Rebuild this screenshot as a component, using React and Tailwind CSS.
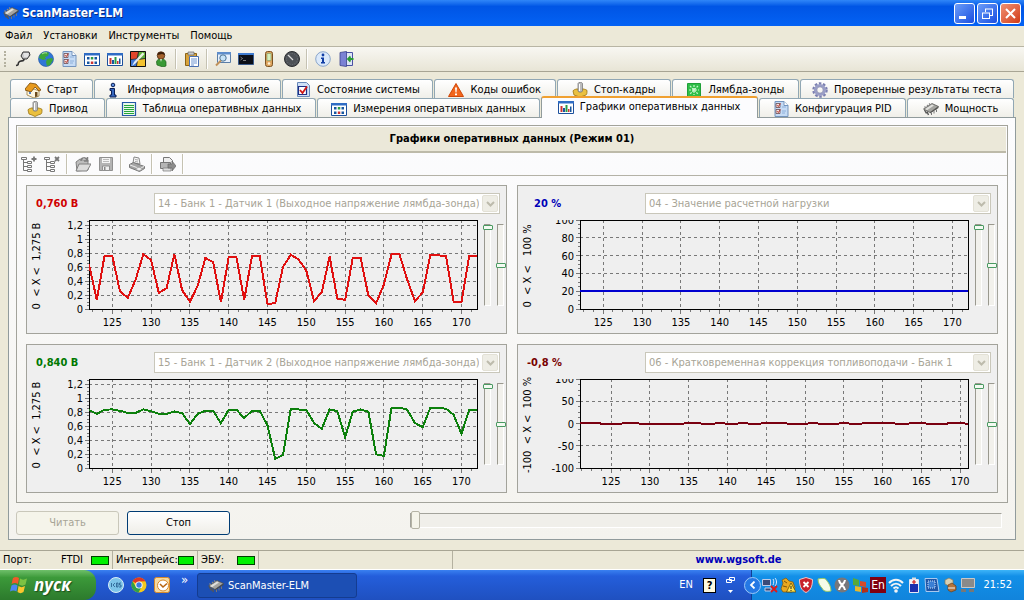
import React from "react";

/* ---------- Icons ---------- */

const Icon = ({ children, className = "w-4 h-4" }) => (
  <svg viewBox="0 0 16 16" className={`${className} shrink-0`} aria-hidden="true">
    {children}
  </svg>
);

const ChipIcon = ({ className }) => (
  <Icon className={className}>
    <path d="M1.500 9l2 3.500M4 10.500l1.500 3.500" stroke="#555" fill="none" strokeWidth="1.400" />
    <path d="M0.500 8L9 2.500l6.500 3L7 11.500z" fill="#a4a4a0" stroke="#4a4a48" strokeWidth="0.700" />
    <path d="M2 8l7-4.500 2 1L4 9.200z" fill="#e0e0dc" />
    <path d="M3 7L1.500 5.500M5.500 5.500L4 4M7.500 4L6 2.500" stroke="#888" strokeWidth="1.200" />
    <path d="M7 11.500v1l8.500-5.500V5.500z" fill="#4b4b49" />
    <path d="M8.500 11.500v2.500M11 10v2.500M13.500 8.500V11" stroke="#777" />
  </Icon>
);

const PlugIcon = () => (
  <Icon>
    <path d="M8 1l6 0 1 3-3 4-4 0-2-3z" fill="#c9c9c9" stroke="#333" />
    <path d="M8.500 3h5M9 5h4" stroke="#fff" />
    <path d="M9 8c0 3-3 1-5 3s1 3-3 3.500" stroke="#333" strokeWidth="1.600" fill="none" />
  </Icon>
);

const GlobeIcon = () => (
  <Icon>
    <circle cx="8" cy="8" r="7.500" fill="#2f76d8" stroke="#1d4f9e" strokeWidth="0.600" />
    <path d="M2 4c2-3 6-4 9-2l-1 3-3 1 1 2-3 1-4-2zM9 8l5-1 1 2-3 5-3 1-1-4z" fill="#3da63a" />
    <path d="M4 3c1-1 3-1.500 5-1" stroke="#b8e6a8" fill="none" />
  </Icon>
);

const ConfigIcon = () => (
  <Icon>
    <path d="M2 0.500h9l4 4v11H2z" fill="#c5dbf5" stroke="#7494bd" />
    <path d="M11 0.500v4h4" fill="#fff" stroke="#7494bd" />
    <path d="M3 2.500h4v4H3zM3 8.500h4v4H3z" fill="#f4e4e2" stroke="#6c4a50" strokeWidth="0.800" />
    <path d="M4 4.200l1.300 1.300L7.500 2.500M4 10.200l1.300 1.300L7.500 8.500" stroke="#b42a20" fill="none" />
    <path d="M9 6h4M9 10h4M9 12h3" stroke="#8fb0da" />
  </Icon>
);

const GridIcon = () => (
  <Icon>
    <path d="M0.500 2.500h15v12H.5z" fill="#fff" stroke="#1c4f9c" />
    <path d="M0 2h16v2.500H0z" fill="#2f6cc4" />
    <path d="M3 6h2.500v2.500H3zM10.500 6H13v2.500h-2.500zM3 10.500h2.500V13H3z" fill="#17569f" />
    <path d="M6.800 6h2.500v2.500H6.800z" fill="#2c9b45" />
    <path d="M6.800 10.500h2.500V13H6.800z" fill="#c33" />
    <path d="M10.500 10.500H13V13h-2.500z" fill="#17569f" />
  </Icon>
);

const BarsIcon = () => (
  <Icon>
    <path d="M0.500 2.500h15v12H.5z" fill="#fff" stroke="#1c4f9c" />
    <path d="M0 2h16v2.500H0z" fill="#2f6cc4" />
    <path d="M2.500 7h2v6h-2z" fill="#c33" />
    <path d="M5 9h2v4H5z" fill="#17569f" />
    <path d="M7.500 6h2v7h-2z" fill="#2c9b45" />
    <path d="M10 10h1.500v3H10z" fill="#c33" />
    <path d="M12 7.500h1.500V13H12z" fill="#17569f" />
  </Icon>
);

const SystemIcon = () => (
  <Icon>
    <path d="M0.500 0.500h15v15H.5z" fill="#333" stroke="#111" />
    <path d="M1 1h7L6.500 7.500 1 8z" fill="#e0452c" />
    <path d="M9 1h6v6l-7 1z" fill="#5fae3a" />
    <path d="M1 9l6-1-1 7H1z" fill="#3e78d6" />
    <path d="M8 9l7-1v7H7z" fill="#f2c230" />
    <path d="M12.500 1.500L4 11l-2 4 4-3 8.500-9z" fill="#fff" opacity="0.850" />
  </Icon>
);

const UserIcon = () => (
  <Icon>
    <path d="M3.500 11c0-4 9-4 9.500 0v4l-3 1-6-2z" fill="#3a9a35" stroke="#1e611b" strokeWidth="0.700" />
    <circle cx="8" cy="4.500" r="3.800" fill="#a4622c" stroke="#40210b" strokeWidth="0.700" />
    <path d="M4.500 4c0-4 7-4 7.500 0L9 3z" fill="#3a1d0a" />
    <path d="M7 8l1 3 1-3z" fill="#d8e8d0" />
  </Icon>
);

const ClipboardIcon = () => (
  <Icon>
    <path d="M1.500 2.500h11v12h-11z" fill="#d8a33c" stroke="#8c6414" />
    <path d="M4 1h6v3H4z" fill="#c9c9c9" stroke="#666" strokeWidth="0.700" />
    <path d="M5.500 5.500h9v10h-9z" fill="#fff" stroke="#4a6fb0" />
    <path d="M7 8h6M7 10h6M7 12h6M7 14h3" stroke="#6d94d1" />
  </Icon>
);

const SearchWindowIcon = () => (
  <Icon>
    <path d="M2.500 1.500h13v10h-13z" fill="#e8f1fc" stroke="#5b7ea8" />
    <path d="M2 1h14v2.500H2z" fill="#5f8ecc" />
    <circle cx="8" cy="7" r="3.200" fill="#c8e4f8" stroke="#4d7494" />
    <path d="M6 9.500L1 14.500" stroke="#c0915a" strokeWidth="2" />
  </Icon>
);

const TerminalIcon = () => (
  <Icon>
    <path d="M0.500 2.500h15v11H.5z" fill="#0b0f18" stroke="#3b5b8c" />
    <path d="M0 2h16v2H0z" fill="#3f7bd0" />
    <path d="M2.500 6l2 1.500-2 1.500M5 9.500h3" stroke="#aaa" fill="none" strokeWidth="0.700" />
  </Icon>
);

const DeviceIcon = () => (
  <Icon>
    <rect x="4.500" y="0.500" width="7" height="15" rx="2" fill="#dca45e" stroke="#7c5322" />
    <rect x="6" y="2.500" width="4" height="7" fill="#d6f0bd" stroke="#7d9a68" strokeWidth="0.600" />
    <circle cx="8" cy="12.500" r="1.300" fill="#fff2d8" />
  </Icon>
);

const GaugeIcon = () => (
  <Icon>
    <circle cx="8" cy="8" r="7.500" fill="#4d5156" stroke="#2b2d30" />
    <circle cx="8" cy="8" r="5.500" fill="none" stroke="#70757a" strokeDasharray="1 1.500" />
    <path d="M4 4l5 5" stroke="#ddd" strokeWidth="1.200" />
  </Icon>
);

const InfoIcon = () => (
  <Icon>
    <circle cx="8" cy="8" r="7.300" fill="#dbe9fa" stroke="#8aa6cb" />
    <circle cx="8" cy="4" r="1.400" fill="#123fa5" />
    <path d="M6 6.500h3V11h1v1.500H6V11h1V8H6z" fill="#123fa5" />
  </Icon>
);

const ExitIcon = () => (
  <Icon>
    <path d="M5.500 1.500h9v13h-9z" fill="#dde6f6" stroke="#4a50a4" />
    <path d="M2 1.500L8.500 0.500v15L2 14.500z" fill="#7b82d4" stroke="#3b418c" strokeWidth="0.800" />
    <path d="M15.500 8H11M12.500 5.500L10 8l2.500 2.500" stroke="#2a9a35" strokeWidth="1.800" fill="none" />
  </Icon>
);

const HomeIcon = () => (
  <Icon>
    <path d="M2 8l7-1 5 2v5l-5 2-7-3z" fill="#fdf6e0" stroke="#8c6a22" strokeWidth="0.700" />
    <path d="M0 7l5-6 6 1 5 6-2 1-4-4-4 5-6-2z" fill="#e79a1e" stroke="#734607" strokeWidth="0.800" />
    <path d="M10 10h2.500v4.500L10 15z" fill="#6b4a1d" />
    <path d="M4 10h2v2H4z" fill="#5683c4" />
  </Icon>
);

const LetterIIcon = () => (
  <Icon>
    <circle cx="8" cy="3" r="1.800" fill="#5b8ce0" stroke="#0b1f55" />
    <path d="M5 6.500h4.500v6.500H11v2H5v-2h1.500V8.500H5z" fill="#3566be" stroke="#0b1f55" />
  </Icon>
);

const CheckPageIcon = () => (
  <Icon>
    <path d="M2.500 0.500h9l3 3v11h-12z" fill="#cfe0f7" stroke="#6888b9" />
    <path d="M3.500 4.500h8v8h-8z" fill="#fff" stroke="#1d2f86" strokeWidth="1.200" />
    <path d="M5 8l2.500 3L12 4.500" stroke="#d01818" strokeWidth="1.800" fill="none" />
  </Icon>
);

const WarningIcon = () => (
  <Icon>
    <path d="M8 1.500L15.500 14.500H.5z" fill="#f2661d" stroke="#cf4709" strokeLinejoin="round" />
    <path d="M7 5.500h2l-.5 5h-1zM7 11.500h2v1.800H7z" fill="#fff" />
  </Icon>
);

const StampIcon = () => (
  <Icon>
    <path d="M1 9c1-2 2-1 3-2h8c1 1 3 0 3 2s0 3-1 4l-3 1-3 1.500L5 14l-3-1z" fill="#eac040" stroke="#9a7412" strokeWidth="0.800" />
    <path d="M6 1.500c0-1.500 4.500-1.500 4.500 0V9c0 1.500-4.500 1.500-4.500 0z" fill="#bcbcbc" stroke="#6f6f6f" strokeWidth="0.700" />
    <path d="M7.500 2v7" stroke="#fff" />
  </Icon>
);

const LambdaIcon = () => (
  <Icon>
    <path d="M1.500 1.500h13v13h-13z" fill="#2fbe48" stroke="#1fa038" />
    <path d="M4 4l8 8M12 4l-8 8M8 3v10M3 8h10" stroke="#c9f5cd" strokeWidth="1.200" strokeDasharray="2 1" />
  </Icon>
);

const GearIcon = () => (
  <Icon>
    <circle cx="8" cy="8" r="6.500" fill="none" stroke="#7b7fb0" strokeWidth="2.500" strokeDasharray="2.500 1.600" />
    <circle cx="8" cy="8" r="4.700" fill="none" stroke="#9a9ec6" strokeWidth="2.800" />
    <circle cx="8" cy="8" r="3.200" fill="none" stroke="#6a6e9e" strokeWidth="0.600" />
  </Icon>
);

const TableIcon = () => (
  <Icon>
    <path d="M1.500 1.500h13v13h-13z" fill="#eafbe9" stroke="#2458a8" strokeWidth="1.200" />
    <path d="M3 4.500h10M3 6.500h10M3 8.500h10M3 10.500h10M3 12.500h10" stroke="#27a53b" />
  </Icon>
);

const TreeIcon = ({ mark }) => (
  <Icon>
    <path d="M0.500 1.500h5v2h-5zM2.500 4v10.500H6M2.500 6.500H6M2.500 10.500H6" fill="none" stroke="#777" />
    <path d="M6.500 5.500h4v2h-4zM6.500 9.500h4v2h-4zM6.500 13.500h4v2h-4z" fill="#fff" stroke="#777" />
    <path d={mark === "add" ? "M13 0.500v5M10.500 3h5" : "M11 1l4 4M15 1l-4 4"} stroke="#777" strokeWidth="1.800" />
  </Icon>
);

const OpenIcon = () => (
  <Icon>
    <path d="M1 6l4-3 3 1h5v10l-11 1z" fill="#bdbdbd" stroke="#808080" />
    <path d="M4 8h12l-4 7H1z" fill="#dcdcdc" stroke="#808080" />
    <path d="M6 5c0-4 5-4 6-1M12.500 1v4H9" fill="none" stroke="#808080" strokeWidth="1.500" />
  </Icon>
);

const SaveIcon = () => (
  <Icon>
    <path d="M1.500 1.500h13v13h-13z" fill="#b4b4b4" stroke="#909090" />
    <path d="M4 2h8v5H4z" fill="#f4f4f4" />
    <path d="M5 3.500h6M5 5.500h6" stroke="#bbb" />
    <path d="M4.500 10h7v4.500h-7z" fill="#eee" stroke="#909090" />
    <path d="M6 11h1.500v3H6z" fill="#888" />
  </Icon>
);

const PrintIcon = () => (
  <Icon>
    <path d="M4 7l1-6 5 1 1 6z" fill="#f6f6f6" stroke="#888" />
    <path d="M6 3.500l3 .5M6 5.500l3 .5" stroke="#aaa" />
    <path d="M0.500 8.500l4-2 11 4v2l-5 3-10-4z" fill="#a5a5a5" stroke="#777" />
    <path d="M1 9l9.500 3.500 4.500-2" fill="none" stroke="#eee" />
    <path d="M6 13l4-2 4 2-4 2z" fill="#eee" stroke="#888" strokeWidth="0.700" />
  </Icon>
);

const ExportIcon = () => (
  <Icon>
    <path d="M3.500 1.500h6l3 3v7h-9z" fill="#eee" stroke="#777" />
    <path d="M0.500 6.500h10v6H.5z" fill="#b5b5b5" stroke="#777" />
    <path d="M3 12h8v3H3z" fill="#ddd" stroke="#777" strokeWidth="0.700" />
    <path d="M8 8h4V5l4 5-4 5v-3H8z" fill="#8c8c8c" stroke="#666" strokeWidth="0.700" />
  </Icon>
);

/* ---------- Data ---------- */

const menu = ["Файл", "Установки", "Инструменты", "Помощь"];

const tools = [
  { label: "Подключение", icon: PlugIcon },
  { label: "Интернет", icon: GlobeIcon },
  { label: "Конфигурация", icon: ConfigIcon },
  { label: "Измерения", icon: GridIcon },
  { label: "Графики", icon: BarsIcon },
  { label: "Система", icon: SystemIcon },
  { label: "Пользователь", icon: UserIcon },
  null,
  { label: "Буфер", icon: ClipboardIcon },
  null,
  { label: "Поиск", icon: SearchWindowIcon },
  { label: "Терминал", icon: TerminalIcon },
  { label: "Устройство", icon: DeviceIcon },
  { label: "Мощность", icon: GaugeIcon },
  null,
  { label: "О программе", icon: InfoIcon },
  { label: "Выход", icon: ExitIcon },
];

const tabsTop = [
  { label: "Старт", icon: HomeIcon, size: "flex-[82]" },
  { label: "Информация о автомобиле", icon: LetterIIcon, size: "flex-[187]" },
  { label: "Состояние системы", icon: CheckPageIcon, size: "flex-[151]" },
  { label: "Коды ошибок", icon: WarningIcon, size: "flex-[121]" },
  { label: "Стоп-кадры", icon: StampIcon, size: "flex-[114]" },
  { label: "Лямбда-зонды", icon: LambdaIcon, size: "flex-[126]" },
  { label: "Проверенные результаты теста", icon: GearIcon, size: "flex-[215]" },
];

const tabsBottom = [
  { label: "Привод", icon: StampIcon, size: "flex-[94]" },
  { label: "Таблица оперативных данных", icon: TableIcon, size: "flex-[210]" },
  { label: "Измерения оперативных данных", icon: GridIcon, size: "flex-[223]" },
  { label: "Графики оперативных данных", icon: BarsIcon, size: "flex-[217]", active: true },
  { label: "Конфигурация PID", icon: ConfigIcon, size: "flex-[147]" },
  { label: "Мощность", icon: ChipIcon, size: "flex-[106]" },
];

const sensor1 = [
  0.64, 0.13, 0.76, 0.76, 0.25, 0.16, 0.42, 0.785, 0.7, 0.23, 0.3, 0.785, 0.27, 0.105, 0.33, 0.73, 0.67,
  0.1, 0.74, 0.74, 0.13, 0.76, 0.76, 0.07, 0.085, 0.605, 0.776, 0.71, 0.55, 0.115, 0.24, 0.75, 0.15, 0.13,
  0.733, 0.733, 0.19, 0.085, 0.35, 0.786, 0.786, 0.42, 0.115, 0.235, 0.78, 0.77, 0.757, 0.1, 0.1, 0.757, 0.757,
];

const sensor2 = [
  0.83, 0.775, 0.835, 0.84, 0.82, 0.79, 0.79, 0.84, 0.815, 0.775, 0.775, 0.81, 0.785, 0.63, 0.775, 0.82, 0.82,
  0.64, 0.835, 0.835, 0.715, 0.82, 0.82, 0.61, 0.13, 0.185, 0.85, 0.838, 0.835, 0.645, 0.56, 0.838, 0.815, 0.44,
  0.81, 0.838, 0.805, 0.195, 0.175, 0.867, 0.867, 0.835, 0.645, 0.585, 0.867, 0.86, 0.85, 0.76, 0.49, 0.835, 0.835,
];

const load = Array(51).fill(20);

// the trim alternates between two levels at these times
const trimSwitches = [123, 126, 128, 134, 136, 138, 139, 141, 142, 144, 147, 150, 151, 154, 155, 157, 161, 163, 165, 168, 170];
const trim = Array.from({ length: 51 }, (_, i) =>
  trimSwitches.filter((t) => t < 121 + i).length % 2 ? -0.8 : 1.6
);

const charts = [
  {
    value: "0,760 В",
    tone: "text-[#d00000]",
    pad: "pl-[9px]",
    source: "14 - Банк 1 - Датчик 1 (Выходное напряжение лямбда-зонда)",
    range: "0  < X <  1,275 В",
    color: "#e01010",
    start: 122,
    min: 0,
    max: 1.275,
    step: 0.2,
    values: sensor1,
  },
  {
    value: "20 %",
    tone: "text-[#0000b8]",
    pad: "pl-4",
    source: "04 - Значение расчетной нагрузки",
    range: "0  < X <   100 %",
    color: "#0000d0",
    start: 122,
    min: 0,
    max: 100,
    step: 20,
    values: load,
  },
  {
    value: "0,840 В",
    tone: "text-[#007800]",
    pad: "pl-[9px]",
    source: "15 - Банк 1 - Датчик 2 (Выходное напряжение лямбда-зонда)",
    range: "0  < X <  1,275 В",
    color: "#0c800c",
    start: 122,
    min: 0,
    max: 1.275,
    step: 0.2,
    values: sensor2,
  },
  {
    value: "-0,8 %",
    tone: "text-[#780000]",
    pad: "pl-[9px]",
    source: "06 - Кратковременная коррекция топливоподачи - Банк 1",
    range: "-100  < X <  100 %",
    color: "#7a0010",
    start: 121,
    min: -100,
    max: 100,
    step: 50,
    values: trim,
  },
];

/* ---------- Chart ---------- */

const LEFT = 62;
const RIGHT = 450;
const TOP = 4;
const BOTTOM = 93;

const Chart = ({ id, chart }) => {
  const { start, min, max, step, values, color, range } = chart;
  const px = (t) => LEFT + ((t - start) / 50) * (RIGHT - LEFT);
  const py = (v) => BOTTOM - ((v - min) / (max - min)) * (BOTTOM - TOP);

  const xMajor = [];
  for (let t = 125; t <= 170; t += 5) xMajor.push(t);
  const xMinor = [];
  for (let t = 120; t <= 175; t += 1.25) if (t > start && t < start + 50) xMinor.push(t);

  const yMajor = [];
  for (let i = 0; min + i * step <= max + 0.001; i++) yMajor.push(min + i * step);
  const yMinor = [];
  for (let i = 0; min + (i * step) / 4 <= max; i++) yMinor.push(min + (i * step) / 4);

  const label = (v) => String(Math.round(v * 10) / 10).replace(".", ",");
  const points = values.map((v, i) => `${px(start + i).toFixed(1)},${py(v).toFixed(1)}`).join(" ");

  return (
    <svg viewBox="0 0 452 114" className="block w-full text-[11px]" role="img" aria-label={chart.source}>
      <defs>
        <clipPath id={`labels-${id}`}>
          <rect x="0" y={TOP} width="452" height="110" />
        </clipPath>
        <clipPath id={`plot-${id}`}>
          <rect x={LEFT} y={TOP} width={RIGHT - LEFT} height={BOTTOM - TOP} />
        </clipPath>
      </defs>

      {/* Grid and ticks */}
      <g stroke="#787878" strokeWidth="1" shapeRendering="crispEdges">
        {xMajor.map((t) => (
          <g key={t}>
            <line x1={px(t)} x2={px(t)} y1={TOP} y2={BOTTOM} strokeDasharray="3 3" />
            <line x1={px(t)} x2={px(t)} y1={BOTTOM} y2={BOTTOM + 5} />
          </g>
        ))}
        {xMinor.map((t) => (
          <line key={t} x1={px(t)} x2={px(t)} y1={BOTTOM} y2={BOTTOM + 3} />
        ))}
        {yMajor.map((v) => (
          <g key={v}>
            <line x1={LEFT} x2={RIGHT} y1={py(v)} y2={py(v)} strokeDasharray="3 3" />
            <line x1={LEFT - 4} x2={LEFT} y1={py(v)} y2={py(v)} />
          </g>
        ))}
        {yMinor.map((v) => (
          <line key={v} x1={LEFT - 2} x2={LEFT} y1={py(v)} y2={py(v)} />
        ))}
      </g>

      <rect
        x={LEFT + 0.5}
        y={TOP + 0.5}
        width={RIGHT - LEFT}
        height={BOTTOM - TOP}
        fill="none"
        stroke="#000"
        shapeRendering="crispEdges"
      />
      <polyline
        clipPath={`url(#plot-${id})`}
        points={points}
        fill="none"
        stroke={color}
        strokeWidth="2"
        shapeRendering="crispEdges"
      />

      {/* Labels */}
      <g clipPath={`url(#labels-${id})`} fill="#000">
        {yMajor.map((v) => (
          <text key={v} x="56" y={py(v) + 4} textAnchor="end">
            {label(v)}
          </text>
        ))}
        {xMajor.map((t) => (
          <text key={t} x={px(t)} y="110" textAnchor="middle">
            {t}
          </text>
        ))}
      </g>
      <text transform="translate(13 50) rotate(-90)" textAnchor="middle" className="whitespace-pre">
        {range}
      </text>
    </svg>
  );
};

const VerticalSlider = ({ label, value }) => (
  <input
    type="range"
    aria-label={label}
    defaultValue={value}
    className="appearance-none m-0 w-[10px] h-[82px] [writing-mode:vertical-lr] [direction:rtl] bg-transparent [&::-webkit-slider-runnable-track]:w-[7px] [&::-webkit-slider-runnable-track]:h-full [&::-webkit-slider-runnable-track]:bg-[#f2f1ec] [&::-webkit-slider-runnable-track]:border [&::-webkit-slider-runnable-track]:border-l-[#9a998f] [&::-webkit-slider-runnable-track]:border-t-[#9a998f] [&::-webkit-slider-runnable-track]:border-r-white [&::-webkit-slider-runnable-track]:border-b-white [&::-webkit-slider-thumb]:appearance-none [&::-webkit-slider-thumb]:w-[10px] [&::-webkit-slider-thumb]:h-[5px] [&::-webkit-slider-thumb]:-ml-[2px] [&::-webkit-slider-thumb]:rounded-[1px] [&::-webkit-slider-thumb]:bg-[#f3faf2] [&::-webkit-slider-thumb]:border [&::-webkit-slider-thumb]:border-[#4a9a62]"
  />
);

const ChartCard = ({ id, chart }) => (
  <section className="min-w-0 border border-[#a3a39b] bg-[#efefef] pt-[7px] pb-[3px]">
    <div className="flex items-center pr-[6px]">
      <div className={`w-[127px] shrink-0 font-bold ${chart.pad} ${chart.tone}`}>{chart.value}</div>
      <div className="relative flex-1 min-w-0">
        <select
          disabled
          aria-label="Параметр"
          className="appearance-none block w-full h-[21px] pl-[3px] pr-5 bg-white border border-[#c9c7ba] text-[#a7a496] opacity-100"
        >
          <option>{chart.source}</option>
        </select>
        <span className="absolute top-0.5 right-0.5 w-4 h-[17px] rounded-[2px] bg-[#eeede5] border border-[#e3e1d6] flex items-center justify-center pointer-events-none">
          <svg viewBox="0 0 9 6" className="w-[9px] h-[6px]">
            <path d="M1 1l3.500 3.500L8 1" fill="none" stroke="#bdbbac" strokeWidth="2" />
          </svg>
        </span>
      </div>
    </div>
    <div className="flex mt-0.5">
      <div className="flex-1 min-w-0">
        <Chart id={id} chart={chart} />
      </div>
      <div className="w-[27px] shrink-0 flex gap-[3px] pl-[3px] pt-2">
        <VerticalSlider label="Масштаб" value={100} />
        <VerticalSlider label="Смещение" value={50} />
      </div>
    </div>
  </section>
);

/* ---------- Tabs and toolbars ---------- */

const Tab = ({ tab }) => {
  const TabIcon = tab.icon;
  const look = tab.active
    ? "relative z-10 -mt-0.5 -mb-px h-[22px] pb-0.5 bg-[#fcfcfe] border-x border-t-2 border-x-[#919b9c] border-t-[#f0a030]"
    : "h-[19px] pt-0.5 bg-linear-to-b from-white to-[#f0efe9] border border-b-0 border-[#91a7b4]";
  return (
    <button
      type="button"
      role="tab"
      aria-selected={!!tab.active}
      className={`${tab.size} ${look} min-w-0 rounded-t-[3px] flex items-center justify-center gap-1.5 whitespace-nowrap`}
    >
      <TabIcon />
      {tab.label}
    </button>
  );
};

const ToolButton = ({ label, children }) => (
  <button type="button" aria-label={label} className="w-[23px] h-[22px] flex items-center justify-center">
    {children}
  </button>
);

const Separator = () => <span className="w-0.5 h-5 mx-[3px] bg-[#c5c2b2] border-r border-white" />;

const Lamp = () => <span className="w-[18px] h-[9px] bg-[#00f000] border border-[#004000]" />;

/* ---------- Windows taskbar ---------- */

const FlagIcon = () => (
  <svg viewBox="0 0 18 18" className="w-[18px] h-[18px]" aria-hidden="true">
    <path d="M3 2c2-1.500 4-1.500 6 0L8 8C6 6.500 4 6.500 1.500 8z" fill="#f0592a" />
    <path d="M10 2.500c2 1.500 4 1.500 7 0L15.500 8.500c-2 1.500-4.500 1.500-6.500 0z" fill="#7cc243" />
    <path d="M1.500 9.500c2-1.500 4-1.500 6 0l-1 6c-2-1.500-4-1.500-6.500 0z" fill="#4c86f0" />
    <path d="M8.500 10c2 1.500 4 1.500 6.500 0L13.500 16c-2 1.500-4 1.500-6 0z" fill="#fbc62e" />
  </svg>
);

const TrayIcons = () => (
  <div className="flex items-center gap-0.5">
    <Icon>
      <path d="M0.500 2.500h8v6h-8zM3 11h6v3H3z" fill="#3a4a78" stroke="#bfcbe8" />
      <path d="M11 2c1 1.500 1 4 0 6M13 1c2 2 2 6 0 8" stroke="#dfe8fa" fill="none" />
      <path d="M9 9l6 6M15 9l-6 6" stroke="#e01818" strokeWidth="1.800" />
    </Icon>
    <Icon>
      <path d="M1 12l2-6-1-3 4-2 3 3 4 1 2 6-3 4H3z" fill="#e8a820" stroke="#7c5608" strokeWidth="0.700" />
      <path d="M4 4l3 2M3 9l4 1" stroke="#7c5608" />
      <path d="M11 6l5 9H6.500z" fill="#ffe04a" stroke="#5c4400" strokeWidth="0.700" />
      <path d="M11 9v3M11 13v1" stroke="#222" />
    </Icon>
    <Icon>
      <path d="M8 0.500l6.500 2c0 7-2 11-6.500 13C3.500 13.500 1.500 9.500 1.500 2.500z" fill="#c8202c" stroke="#f0c8c8" />
      <path d="M5.500 5l5 5M10.500 5l-5 5" stroke="#fff" strokeWidth="1.800" />
    </Icon>
    <Icon>
      <path d="M2 2c5-1 8-1 9 2 2 2 4 6 4 10-5 1-8 0-9-3C4 9 2 6 2 2z" fill="#f4fbe8" stroke="#9ac860" />
    </Icon>
    <Icon>
      <circle cx="8" cy="8" r="7.500" fill="#77777b" />
      <path d="M5 3c0 4 6 6 6 10M11 3c0 4-6 6-6 10" stroke="#fff" strokeWidth="2" fill="none" />
    </Icon>
    <Icon>
      <path d="M1 1l6 2v6L1 8z" fill="#58a838" />
      <path d="M8 4l6 1v5l-6-1z" fill="#d84a28" />
      <path d="M3 9l6 1v5l-6-1z" fill="#e8b828" />
      <path d="M10 10l6 1v4l-6 1z" fill="#b83018" />
    </Icon>
    <span className="w-4 h-4 bg-[#800010] text-white text-[12px] leading-4 text-center">En</span>
    <Icon>
      <path d="M1 6c4-4.500 10-4.500 14 0M3 9c3-3 7-3 10 0M5.500 11.500c1.500-1.500 3.500-1.500 5 0" stroke="#f4f4f4" strokeWidth="2" fill="none" />
      <circle cx="8" cy="14" r="1.800" fill="#f4f4f4" />
    </Icon>
    <Icon>
      <path d="M6 0.500h4v2H6z" fill="#ddd" />
      <path d="M3.500 2.500h9v13h-9z" fill="#1c2fae" stroke="#e6e6f4" />
      <path d="M4 3h8v4H4z" fill="#f4f4f4" />
      <path d="M8 3v4M6 5h4" stroke="#d01818" strokeWidth="1.200" />
    </Icon>
    <Icon>
      <path d="M1 1.500h12l2 13H2z" fill="#1f56a8" stroke="#a8c8ee" />
      <path d="M4 4h7v7H4z" fill="#3b7fd4" stroke="#d4e4f8" strokeDasharray="1 1" />
    </Icon>
    <Icon>
      <path d="M3 3l4-2 4 2v4l-4 2-4-2z" fill="#d8d0b4" stroke="#84785a" strokeWidth="0.700" />
      <path d="M6 8l4-2 4 3v4l-5 2-3-2z" fill="#b4743c" stroke="#6c3c14" strokeWidth="0.700" />
      <path d="M6 11h7" stroke="#f4f4f4" />
    </Icon>
    <Icon>
      <path d="M1.500 1.500h13v9h-13z" fill="#8a8a8a" stroke="#c8c8c8" />
      <path d="M1 12h5v3H1zM9 12h5v3H9z" fill="#777" />
    </Icon>
  </div>
);

const Taskbar = () => (
  <footer className="flex h-[30px] bg-linear-to-b from-[#3a80f0] via-[#245edb] via-20% to-[#1f50c0] text-white">
    <button
      type="button"
      className="w-24 shrink-0 flex items-center gap-1.5 pl-2.5 rounded-r-xl bg-linear-to-b from-[#6fc06a] via-[#3c9a3a] via-25% to-[#2c7a2c] text-[17px] font-bold italic [font-family:'Open_Sans',sans-serif] [text-shadow:1px_1px_1px_#1d4f1d]"
    >
      <FlagIcon />
      пуск
    </button>

    {/* Quick launch */}
    <div className="flex items-center gap-[7px] pl-3 w-[101px] shrink-0">
      <Icon>
        <circle cx="8" cy="8" r="7.500" fill="#7cc4e8" stroke="#d8eef8" />
        <path d="M3.500 6v4M5 8l2-2M5 8l2 2M8.500 6v4h1.500V6zM13 6h-1.500v2H13v2h-2" stroke="#245c8c" fill="none" strokeWidth="0.800" />
      </Icon>
      <Icon>
        <circle cx="8" cy="8" r="7.500" fill="#f4c81c" />
        <path d="M8 8L1.500 4.200A7.500 7.500 0 0 1 14.500 4.300L8 4.500z" fill="#dc3826" />
        <path d="M1.500 4.200A7.500 7.500 0 0 0 7.500 15.500L10.500 10 5 10z" fill="#2fa04a" />
        <circle cx="8" cy="8" r="3.600" fill="#fff" />
        <circle cx="8" cy="8" r="2.700" fill="#3c7ce0" />
      </Icon>
      <Icon>
        <rect x="0.500" y="0.500" width="15" height="15" rx="2" fill="#f6d9a0" stroke="#d88a2c" />
        <circle cx="9" cy="8.500" r="5.500" fill="#fff" stroke="#d88a2c" />
        <path d="M6 7l3 3 4-3.500" stroke="#b86410" strokeWidth="1.500" fill="none" />
      </Icon>
      <span className="self-start text-[13px] leading-5 pl-1">»</span>
    </div>

    <button
      type="button"
      className="w-40 h-[25px] mt-[3px] flex items-center gap-1 pl-2.5 rounded-[3px] bg-[#1c4fb4] border border-[#143c90]"
    >
      <ChipIcon className="w-4 h-4" />
      ScanMaster-ELM
    </button>

    {/* Language bar */}
    <div className="ml-auto flex items-center gap-2.5 pr-4">
      <span>EN</span>
      <span className="w-[13px] h-[15px] bg-[#fffbe0] border border-black text-black font-bold text-center leading-[14px]">?</span>
      <svg viewBox="0 0 9 18" className="w-[9px] h-[18px]" aria-hidden="true">
        <path d="M3.500 1.500h5v3h-5zM.5 3.500h5v3h-5z" fill="#245edb" stroke="#fff" />
        <path d="M2 14h5l-2.500 3z" fill="#fff" />
      </svg>
    </div>

    {/* Tray */}
    <div className="flex items-center w-[273px] shrink-0 bg-linear-to-b from-[#3cb4f8] via-[#1290e8] via-20% to-[#1184dc] border-l border-[#0f3f94]">
      <button
        type="button"
        aria-label="Показать значки"
        className="-ml-2 mr-px w-[17px] h-[17px] shrink-0 rounded-full bg-[#2478e4] border border-[#9cc8f8] flex items-center justify-center"
      >
        <svg viewBox="0 0 8 8" className="w-2 h-2">
          <path d="M5.500 0.500L2 4l3.500 3.500" fill="none" stroke="#fff" strokeWidth="1.800" />
        </svg>
      </button>
      <TrayIcons />
      <span className="ml-auto pr-3">21:52</span>
    </div>
  </footer>
);

/* ---------- Page ---------- */

const App = () => {
  return (
    <div className="min-h-screen flex flex-col bg-[#ece9d8] text-black text-[11px] leading-[14px] [font-family:'DejaVu_Sans_Condensed','DejaVu_Sans',sans-serif]">
      {/* Title bar */}
      <header className="flex items-center h-[26px] px-[3px] bg-linear-to-b from-[#2f86f8] via-[#0055e5] via-25% to-[#0462f4] text-white">
        <ChipIcon className="w-4 h-4" />
        <h1 className="ml-[3px] text-[12px] font-bold [text-shadow:1px_1px_0_#0a2a80]">ScanMaster-ELM</h1>
        <div className="ml-auto flex gap-0.5">
          <button type="button" aria-label="Свернуть" className="w-[21px] h-[21px] rounded-[3px] border border-white bg-linear-to-br from-[#6c9cf8] to-[#1c4ce0]">
            <svg viewBox="0 0 19 19">
              <path d="M4 12h7v3H4z" fill="#fff" />
            </svg>
          </button>
          <button type="button" aria-label="Восстановить" className="w-[21px] h-[21px] rounded-[3px] border border-white bg-linear-to-br from-[#6c9cf8] to-[#1c4ce0]">
            <svg viewBox="0 0 19 19" fill="none" stroke="#fff">
              <path d="M7.500 8V5M7 5h8M14.500 5v6M12 11.500h3M4 9h8M4.500 9v6M4 14.500h8M11.500 9v6" />
            </svg>
          </button>
          <button type="button" aria-label="Закрыть" className="w-[21px] h-[21px] rounded-[3px] border border-white bg-linear-to-br from-[#f09070] to-[#d03810]">
            <svg viewBox="0 0 19 19">
              <path d="M5 5l9 9M14 5l-9 9" stroke="#fff" strokeWidth="2" />
            </svg>
          </button>
        </div>
      </header>

      {/* Menu */}
      <nav className="flex items-center gap-[11px] h-[21px] px-[5px] border-b border-[#b8b5a4]">
        {menu.map((item) => (
          <button key={item} type="button">
            {item}
          </button>
        ))}
      </nav>

      {/* Main toolbar */}
      <div className="flex items-center h-[25px] pl-1 bg-linear-to-b from-[#f8f7f2] to-[#e8e5d6] border-b border-[#a8a594]">
        <span className="w-0.5 h-4 mr-[5px] border-l-2 border-dotted border-[#b4b1a0]" />
        {tools.map((tool, i) =>
          tool ? (
            <ToolButton key={i} label={tool.label}>
              <tool.icon />
            </ToolButton>
          ) : (
            <Separator key={i} />
          )
        )}
      </div>

      <main className="flex-1 px-2 pt-[7px]">
        {/* Tabs */}
        <div role="tablist" className="flex gap-px px-0.5">
          {tabsTop.map((tab) => (
            <Tab key={tab.label} tab={tab} />
          ))}
        </div>
        <div role="tablist" className="flex gap-px px-0.5">
          {tabsBottom.map((tab) => (
            <Tab key={tab.label} tab={tab} />
          ))}
        </div>

        {/* Tab page */}
        <div className="p-[7px] pb-1 border border-[#919b9c] bg-linear-to-b from-[#fcfcfe] to-[#f4f3ee]">
          <div className="border border-[#a3a39b]">
            <div className="h-[26px] m-px mb-0 flex items-center justify-center bg-[#ebe8d9] border-b-2 border-[#bdbaa9]">
              <h2 className="font-bold">Графики оперативных данных (Режим 01)</h2>
            </div>
            <div className="flex items-center h-[23px] border-b border-[#b4b2a6]">
              <ToolButton label="Добавить">
                <TreeIcon mark="add" />
              </ToolButton>
              <ToolButton label="Удалить">
                <TreeIcon mark="remove" />
              </ToolButton>
              <Separator />
              <ToolButton label="Открыть">
                <OpenIcon />
              </ToolButton>
              <ToolButton label="Сохранить">
                <SaveIcon />
              </ToolButton>
              <Separator />
              <ToolButton label="Печать">
                <PrintIcon />
              </ToolButton>
              <Separator />
              <ToolButton label="Экспорт">
                <ExportIcon />
              </ToolButton>
              <Separator />
            </div>
            <div className="grid grid-cols-2 gap-2.5 p-[9px]">
              {charts.map((chart, i) => (
                <ChartCard key={chart.source} id={i} chart={chart} />
              ))}
            </div>
          </div>

          {/* Actions */}
          <div className="flex items-start mt-2">
            <button type="button" disabled className="w-[103px] h-6 rounded-[3px] border border-[#c9c7ba] bg-[#f5f4ea] text-[#a7a496]">
              Читать
            </button>
            <button type="button" className="ml-2 w-[103px] h-6 rounded-[3px] border border-[#003c74] bg-linear-to-b from-white to-[#efeee8]">
              Стоп
            </button>
            <input
              type="range"
              disabled
              defaultValue={0}
              aria-label="Позиция"
              className="appearance-none flex-1 ml-[180px] mr-1.5 h-[18px] bg-transparent [&::-webkit-slider-runnable-track]:h-[15px] [&::-webkit-slider-runnable-track]:bg-[#f0efea] [&::-webkit-slider-runnable-track]:border [&::-webkit-slider-runnable-track]:border-t-[#a3a39b] [&::-webkit-slider-runnable-track]:border-l-[#a3a39b] [&::-webkit-slider-runnable-track]:border-r-white [&::-webkit-slider-runnable-track]:border-b-white [&::-webkit-slider-thumb]:appearance-none [&::-webkit-slider-thumb]:w-[9px] [&::-webkit-slider-thumb]:h-[18px] [&::-webkit-slider-thumb]:-mt-[3px] [&::-webkit-slider-thumb]:rounded-[2px] [&::-webkit-slider-thumb]:bg-[#f5f4ea] [&::-webkit-slider-thumb]:border [&::-webkit-slider-thumb]:border-[#b5b3a5]"
            />
          </div>
        </div>
      </main>

      {/* Status bar */}
      <div className="flex items-stretch h-5 mt-2 border-t border-[#a8a594] border-b border-b-white">
        <div className="w-[113px] shrink-0 flex items-center px-[3px] border-r border-[#b4b1a0]">
          Порт:
          <span className="ml-auto mr-2">FTDI</span>
          <Lamp />
        </div>
        <div className="w-[85px] shrink-0 flex items-center justify-between px-[3px] border-r border-[#b4b1a0]">
          Интерфейс:
          <Lamp />
        </div>
        <div className="w-[61px] shrink-0 flex items-center justify-between px-[3px] border-r border-[#b4b1a0]">
          ЭБУ:
          <Lamp />
        </div>
        <div className="w-[194px] shrink border-r border-[#b4b1a0]" />
        <div className="flex-1 flex items-center justify-center">
          <a href="#wgsoft" className="font-bold text-[#0000b8]">
            www.wgsoft.de
          </a>
        </div>
      </div>

      <Taskbar />
    </div>
  );
};

export default App;
